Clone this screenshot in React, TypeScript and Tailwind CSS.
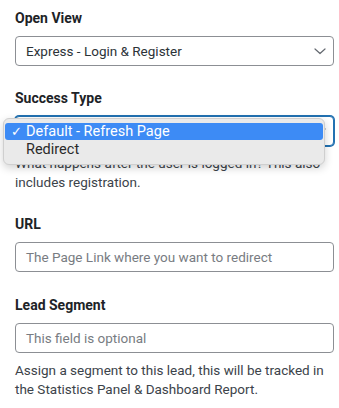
const FONT = "font-['Roboto','Liberation_Sans',sans-serif]";

function Label({ children }: { children: React.ReactNode }) {
  return <div className="text-[14px] leading-5 font-bold text-[#1d2327] mb-[8px]">{children}</div>;
}

function Chevron() {
  return (
    <svg width="12" height="7" viewBox="0 0 12 7" fill="none" className="shrink-0">
      <path d="M1 1 L6 5.5 L11 1" stroke="#646970" strokeWidth="1.2" strokeLinecap="round" strokeLinejoin="round" />
    </svg>
  );
}

function SelectBox({ value, focused }: { value: string; focused?: boolean }) {
  return (
    <div
      className={`h-[30px] flex items-center justify-between rounded-[4px] bg-white pl-[10px] pr-[7px] text-[13.5px] text-[#2c3338] border ${
        focused ? 'border-[#2271b1] shadow-[0_0_0_1px_#2271b1]' : 'border-[#8c8f94]'
      }`}
    >
      <span>{value}</span>
      <Chevron />
    </div>
  );
}

function TextBox({ placeholder }: { placeholder: string }) {
  return (
    <div className="h-[30px] flex items-center rounded-[4px] bg-white border border-[#8c8f94] px-[10px] text-[13.5px] text-[#787c82]">
      {placeholder}
    </div>
  );
}

function Help({ children }: { children: React.ReactNode }) {
  return <p className="mt-[8px] text-[13.5px] leading-[19px] text-[#3c434a]">{children}</p>;
}

export default function App() {
  return (
    <div className={`relative w-[339px] h-[408px] overflow-hidden bg-white pl-[15px] pr-[5px] pt-[8px] ${FONT}`}>
      <div>
        <Label>Open View</Label>
        <SelectBox value="Express - Login & Register" />
      </div>

      <div className="mt-[22px]">
        <Label>Success Type</Label>
        <SelectBox value="Default - Refresh Page" focused />
        <Help>What happens after the user is logged in? This also includes registration.</Help>
      </div>

      <div className="mt-[22px]">
        <Label>URL</Label>
        <TextBox placeholder="The Page Link where you want to redirect" />
      </div>

      <div className="mt-[23px]">
        <Label>Lead Segment</Label>
        <TextBox placeholder="This field is optional" />
        <Help>Assign a segment to this lead, this will be tracked in the Statistics Panel &amp; Dashboard Report.</Help>
      </div>

      {/* native select popup */}
      <div className="absolute left-[3px] top-[118px] w-[322px] h-[47px] rounded-[6px] bg-[#eaeaea] border border-[#cfcfcf] shadow-[0_3px_8px_rgba(0,0,0,0.18)] pt-[4px] px-[1px] text-[14.5px] leading-[17px]">
        <div className="flex items-center h-[17px] rounded-[3px] bg-[#3d8bf5] text-white">
          <span className="w-[21px] pl-[6px] text-[13px]">✓</span>
          <span>Default - Refresh Page</span>
        </div>
        <div className="flex items-center h-[18px] text-[#2a2a2a]">
          <span className="w-[21px]" />
          <span>Redirect</span>
        </div>
      </div>
    </div>
  );
}
